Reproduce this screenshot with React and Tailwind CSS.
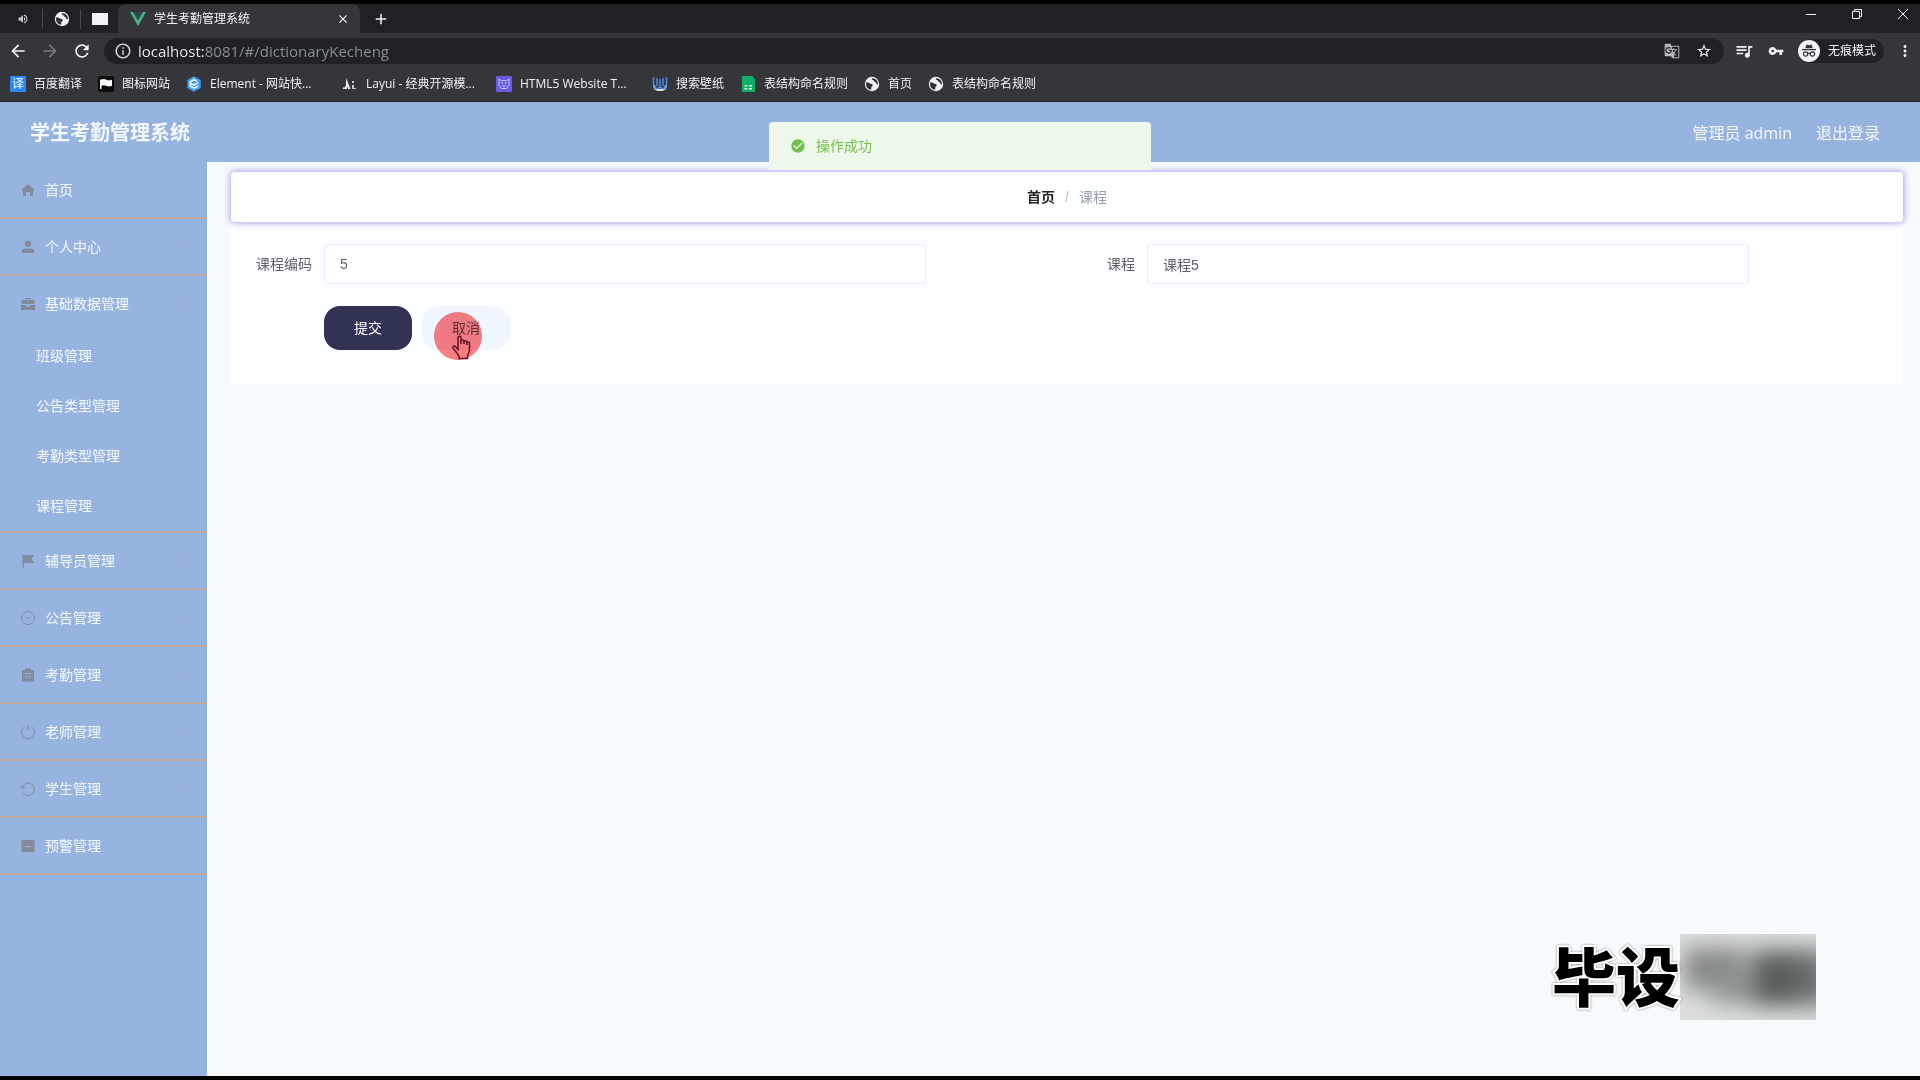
import { useState } from "react";
import {
  MdAdd,
  MdArrowBack,
  MdArrowForward,
  MdCheckCircle,
  MdClose,
  MdGTranslate,
  MdInfoOutline,
  MdMoreVert,
  MdQueueMusic,
  MdRefresh,
  MdStarBorder,
  MdVolumeUp,
  MdVpnKey,
} from "react-icons/md";
import { ChevronDown, ChevronUp } from "lucide-react";

function GlobeIcon() {
  return (
    <svg viewBox="0 0 16 16" className="size-4 shrink-0">
      <circle cx="8" cy="8" r="7.2" fill="#f1f3f4" />
      <path
        d="M2.600 6.200c1.800-.2 2.200.8 3.400 1.200 1.400.5 2.600.3 2.800 1.600.2 1.300-1.500 1.300-1.600 2.600v2.200C4 13.500 2 11 2 8c0-.7.3-1.300.6-1.800zM8.200 2.200c-.8.9-.3 1.700.8 1.900 1 .2.6 1.500 1.900 1.700 1.100.2 1.300 1.200.8 2 1.200-.3 2 .4 2.200.9.6-3.400-2-6.600-5.700-6.500z"
        fill="#303134"
      />
    </svg>
  );
}

function VueIcon() {
  return (
    <svg viewBox="0 0 16 14" className="h-3.5 w-4 shrink-0">
      <path d="M0 0h3.200L8 8.400 12.800 0H16L8 14z" fill="#41b883" />
      <path d="M3.200 0h2.900L8 3.400 9.900 0h2.900L8 8.400z" fill="#35495e" />
    </svg>
  );
}

function TranslateBadge() {
  return (
    <span className="flex size-4 shrink-0 items-center justify-center bg-[#2b87f5] text-[12px] leading-4 text-white">
      译
    </span>
  );
}

function FlagBadge() {
  return (
    <svg viewBox="0 0 16 16" className="size-4 shrink-0">
      <rect width="16" height="16" rx="2" fill="#0c0c0d" />
      <path
        d="M2 3.500h1.500c2-1 3.500-.5 4.800.2 1.700.9 3.200.7 5.700 0v6c-2.500 1-4 .9-5.800.1-1.500-.7-3-.8-4.700 0V13H2z"
        fill="#fff"
      />
    </svg>
  );
}

function ElementBadge() {
  return (
    <svg viewBox="0 0 16 16" className="size-4 shrink-0">
      <path d="M8 .3l6.700 3.800v7.800L8 15.700 1.300 11.900V4.100z" fill="#409eff" />
      <path
        d="M11.500 4.700L8 2.800 3.600 5.300v5.300L8 13.100l4.200-2.400V9.200L8 11.500l-2.900-1.600V8.600L8 10l4.200-2.400V6L8 8.300 5.100 7V6.200L8 4.600l2 1.100z"
        fill="#fff"
      />
    </svg>
  );
}

function LayuiBadge() {
  return (
    <svg viewBox="0 0 16 16" className="size-4 shrink-0">
      <path d="M4 2l4.500 11H6.200L5 9.500V13H1v-1.500h1.800L4 9z" fill="#f1f3f4" />
      <path d="M10 5h2v2h-2zM10 9h2v4h-2zM12 12h2v1h-2z" fill="#c8cacd" />
    </svg>
  );
}

function HtmlBadge() {
  return (
    <svg viewBox="0 0 16 16" className="size-4 shrink-0">
      <rect width="16" height="16" fill="#6a5be2" />
      <path
        d="M3 3l2.500 1.500h5L13 3v6l-2 3.500H5L3 9z"
        fill="none"
        stroke="#b9c4ff"
      />
      <path d="M5.500 7h1.500M9 7h1.500M6.500 10h3" stroke="#dfe4ff" />
    </svg>
  );
}

function WallpaperBadge() {
  return (
    <svg viewBox="0 0 16 16" className="size-4 shrink-0" fill="none">
      <path d="M2 9c0 3 2 5 6 5s6-2 6-5" stroke="#e7eefb" strokeWidth="2" />
      <path
        d="M1.500 1v8c0 2 1.500 3.500 3.500 3.500s3-1.500 3-3.500V3M8 9c0 2 1 3.500 3 3.500s3.500-1.500 3.500-3.500V1M5 2v8M11 2v8"
        stroke="#4a8ae6"
        strokeWidth="1.500"
      />
    </svg>
  );
}

function SheetBadge() {
  return (
    <svg viewBox="0 0 16 16" className="size-4 shrink-0">
      <path d="M2 0h10l3 3v13H2z" fill="#12ad66" />
      <path d="M4.500 9h3v1.500h-3zM9 9h3v1.500H9zM4.500 12h3v1.500h-3zM9 12h3v1.500H9z" fill="#d9f6e6" />
    </svg>
  );
}

function IncognitoIcon() {
  return (
    <svg viewBox="0 0 22 22" className="size-[22px] shrink-0">
      <circle cx="11" cy="11" r="11" fill="#f1f3f4" />
      <path d="M7.300 8.200L8.400 4.500l2.600.7 2.600-.7 1.100 3.700zM4 9h14v1.200H4z" fill="#35363a" />
      <g fill="none" stroke="#35363a" strokeWidth="1.200">
        <circle cx="7.600" cy="14" r="2.200" />
        <circle cx="14.400" cy="14" r="2.200" />
        <path d="M9.800 13.600c.8-.5 1.600-.5 2.400 0" />
      </g>
    </svg>
  );
}

// Sidebar glyphs, all drawn on a 16px grid
const glyphs = {
  home: <path d="M8 2l6.500 6-1.500 1v5h-3v-4H6v4H3V9L1.500 8z" fill="currentColor" />,
  user: (
    <path
      d="M8 1.500a3.300 3.300 0 110 6.600 3.300 3.300 0 010-6.600zM1.500 14c0-3 1.500-4.500 4-4.500h5c2.500 0 4 1.500 4 4.500z"
      fill="currentColor"
    />
  ),
  briefcase: (
    <path
      d="M5 4V2h6v2h3.500v4h-13V4zm1.200 0h3.600v-.9H6.200zM1 9h5v1.500h4V9h5v5H1z"
      fill="currentColor"
    />
  ),
  flag: <path d="M2.500 2H14l-2.500 4L14 10H4v4.500H2.500z" fill="currentColor" />,
  chat: (
    <g fill="none" stroke="currentColor">
      <circle cx="8" cy="8" r="6.500" />
      <path d="M5.500 8.500c1.500-1 3.500-1 5 0" />
    </g>
  ),
  clipboard: (
    <>
      <path d="M2 3h3V1.500h6V3h3v11.500H2z" fill="currentColor" />
      <path d="M4.500 6.500h7M5 10h6" stroke="#97b4e1" />
    </>
  ),
  power: (
    <path
      d="M4.500 2.800A6.500 6.500 0 1 0 11.500 2.800M8 1.500V6"
      fill="none"
      stroke="currentColor"
    />
  ),
  refresh: (
    <path
      d="M2 7A6.300 6.300 0 1 1 3 12M.5 4.500L2 7.500l3-1.500"
      fill="none"
      stroke="currentColor"
    />
  ),
  comment: (
    <>
      <path d="M1.500 2h13v12h-13z" fill="currentColor" />
      <path d="M5 8.500h6" stroke="#97b4e1" />
    </>
  ),
};

const bookmarks = [
  { label: "百度翻译", icon: <TranslateBadge />, width: "w-12" },
  { label: "图标网站", icon: <FlagBadge />, width: "w-12" },
  { label: "Element - 网站快...", icon: <ElementBadge />, width: "w-[116px]" },
  { label: "Layui - 经典开源模...", icon: <LayuiBadge />, width: "w-[114px]" },
  { label: "HTML5 Website T...", icon: <HtmlBadge />, width: "w-[116px]" },
  { label: "搜索壁纸", icon: <WallpaperBadge />, width: "w-12" },
  { label: "表结构命名规则", icon: <SheetBadge />, width: "w-[84px]" },
  { label: "首页", icon: <GlobeIcon />, width: "w-6" },
  { label: "表结构命名规则", icon: <GlobeIcon />, width: "w-[84px]" },
];

const menu = [
  { label: "首页", icon: "home" },
  { label: "个人中心", icon: "user", arrow: true },
  {
    label: "基础数据管理",
    icon: "briefcase",
    arrow: true,
    children: ["班级管理", "公告类型管理", "考勤类型管理", "课程管理"],
  },
  { label: "辅导员管理", icon: "flag", arrow: true },
  { label: "公告管理", icon: "chat", arrow: true },
  { label: "考勤管理", icon: "clipboard", arrow: true },
  { label: "老师管理", icon: "power", arrow: true },
  { label: "学生管理", icon: "refresh", arrow: true },
  { label: "预警管理", icon: "comment" },
];

function BrowserChrome() {
  return (
    <div className="border-b border-[#27282b] bg-[#35363a] text-[#f1f3f4]">
      <div className="flex h-[29px] items-stretch bg-[#202124]">
        <div className="flex w-[118px] items-center">
          <button type="button" aria-label="声音标签页" className="flex w-[42px] items-center justify-center pl-1">
            <MdVolumeUp className="size-3 text-[#c8cacd]" />
          </button>
          <button
            type="button"
            aria-label="网页标签页"
            className="flex h-5 w-[39px] items-center justify-center border-x border-[#4a4b4f]"
          >
            <GlobeIcon />
          </button>
          <button type="button" aria-label="空白标签页" className="flex flex-1 items-center justify-center">
            <span className="h-3 w-4 bg-[#f1f3f4]" />
          </button>
        </div>
        <div className="flex w-[242px] items-center rounded-t-lg bg-[#35363a] pr-2.5 pl-3">
          <VueIcon />
          <span className="ml-2 flex-1 text-[12px] leading-4">学生考勤管理系统</span>
          <button type="button" aria-label="关闭标签页">
            <MdClose className="size-3.5" />
          </button>
        </div>
        <button type="button" aria-label="新标签页" className="ml-3">
          <MdAdd className="size-[18px]" />
        </button>
        <div className="ml-auto flex h-5 items-center gap-9 pr-3">
          <button type="button" aria-label="最小化" className="flex size-2.5 items-center">
            <span className="h-px w-full bg-[#f1f3f4]" />
          </button>
          <button type="button" aria-label="还原">
            <svg viewBox="0 0 10 10" className="size-2.5" fill="none" stroke="#f1f3f4">
              <path d="M.5 2.500h7v7h-7zM2.500 2.500v-2h7v7h-2" />
            </svg>
          </button>
          <button type="button" aria-label="关闭">
            <svg viewBox="0 0 10 10" className="size-2.5" stroke="#f1f3f4">
              <path d="M0 0l10 10M10 0L0 10" />
            </svg>
          </button>
        </div>
      </div>

      <div className="flex h-9 items-center pr-1.5 pl-2">
        <button type="button" aria-label="后退">
          <MdArrowBack className="size-5" />
        </button>
        <button type="button" aria-label="前进" className="ml-3">
          <MdArrowForward className="size-5 text-[#77797d]" />
        </button>
        <button type="button" aria-label="刷新" className="ml-3">
          <MdRefresh className="size-5" />
        </button>
        <div className="ml-3 flex h-[26px] flex-1 items-center rounded-full bg-[#202124] pr-3 pl-2.5">
          <MdInfoOutline className="size-[18px] shrink-0 text-[#d4d6d9]" />
          <input
            aria-label="地址栏"
            defaultValue="localhost:8081/#/dictionaryKecheng"
            className="ml-1.5 flex-1 bg-[linear-gradient(90deg,#f1f3f4_66px,#8d9196_66px)] bg-clip-text text-[15px] leading-5 text-transparent outline-none"
          />
          <button type="button" aria-label="翻译">
            <MdGTranslate className="size-4 text-[#b6b8bb]" />
          </button>
          <button type="button" aria-label="收藏" className="ml-4">
            <MdStarBorder className="size-4" />
          </button>
        </div>
        <div className="flex items-center pl-2.5">
          <button type="button" aria-label="媒体控制">
            <MdQueueMusic className="size-5" />
          </button>
          <button type="button" aria-label="密码" className="ml-3.5">
            <MdVpnKey className="size-4" />
          </button>
          <button
            type="button"
            className="ml-3.5 flex h-6 items-center gap-2 rounded-full bg-[#202124] pr-2 text-[12px] leading-4"
          >
            <IncognitoIcon />
            无痕模式
          </button>
          <button type="button" aria-label="更多" className="ml-3">
            <MdMoreVert className="size-[18px]" />
          </button>
        </div>
      </div>

      <div className="flex h-8 items-center gap-4 pb-[3px] pl-2.5">
        {bookmarks.map(({ label, icon, width }, index) => (
          <a key={index} href="#" className="flex items-center gap-2">
            {icon}
            <span className={`${width} text-[12px] leading-4 whitespace-nowrap`}>{label}</span>
          </a>
        ))}
      </div>
    </div>
  );
}

function Sidebar() {
  const [openItem, setOpenItem] = useState("基础数据管理");

  return (
    <nav className="w-[207px] shrink-0 text-[14px] leading-5 text-[#f4f9ff]">
      {menu.map(({ label, icon, arrow, children }) => {
        const isOpen = openItem === label;
        const Arrow = isOpen ? ChevronUp : ChevronDown;
        return (
          <div key={label} className="border-b-2 border-[#bfab9f]">
            <button
              type="button"
              onClick={() => setOpenItem(isOpen ? null : label)}
              className="flex h-[55px] w-full items-center pr-5 pl-5 text-left"
            >
              <svg viewBox="0 0 16 16" className="mr-[9px] size-4 text-[#828a9c]">
                {glyphs[icon]}
              </svg>
              <span className="flex-1">{label}</span>
              {arrow && <Arrow className="size-3 text-[#b5a9d3]" strokeWidth={2} />}
            </button>
            {children && isOpen && (
              <ul>
                {children.map((child) => (
                  <li key={child}>
                    <a href="#" className="flex h-[50px] items-center pl-9">
                      {child}
                    </a>
                  </li>
                ))}
              </ul>
            )}
          </div>
        );
      })}
    </nav>
  );
}

function FormField({ id, label, defaultValue }) {
  return (
    <div className="flex items-center">
      <label htmlFor={id} className="w-20 shrink-0 pr-3 text-right">
        {label}
      </label>
      <div className="flex-1">
        <input
          id={id}
          defaultValue={defaultValue}
          className="h-10 w-[81%] rounded border border-[#e9edf2] bg-transparent px-[15px] outline-none"
        />
      </div>
    </div>
  );
}

function Pointer() {
  return (
    <svg viewBox="0 0 48 48" className="pointer-events-none absolute top-1.5 left-3 size-12 max-w-none mix-blend-multiply">
      <circle cx="24" cy="24" r="24" fill="#ff7e82" />
      <path
        d="M24 25.500c0-1.800 3-1.800 3 0v6.500-3c0-1.500 3-1.500 3 0v1c0-1.500 2.800-1.500 2.800 0v1c0-1.500 2.700-1.300 2.700.2v6.300c0 3-1.500 4.500-2 6.500v2.500h-8.500v-2c-1-3-4.500-5.500-6-8.500-.8-2 1.500-2.700 2.800-1l2.200 2.500zM30 32v-2M32.800 33v-2"
        fill="none"
        stroke="#6b1220"
        strokeWidth="1.500"
      />
    </svg>
  );
}

function Watermark() {
  return (
    <div className="pointer-events-none absolute right-26 bottom-14 flex items-center">
      <span className="text-[64px] leading-[86px] font-black text-black [paint-order:stroke] [-webkit-text-stroke:4px_#fff] drop-shadow-[0_0_1px_#888]">
        毕设
      </span>
      <svg viewBox="0 0 136 86" className="h-[86px] w-34">
        <defs>
          <filter id="soft" x="-50%" y="-50%" width="200%" height="200%">
            <feGaussianBlur stdDeviation="11" />
          </filter>
        </defs>
        <rect width="136" height="86" fill="#dcdede" />
        <g filter="url(#soft)">
          <rect x="4" y="14" width="62" height="42" fill="#868888" />
          <rect x="32" y="40" width="42" height="30" fill="#929494" />
          <rect x="72" y="16" width="56" height="56" fill="#5c5e5e" />
          <rect x="120" y="16" width="30" height="56" fill="#6e7070" />
        </g>
      </svg>
    </div>
  );
}

export default function App() {
  return (
    <div className="flex min-h-screen flex-col border-y-4 border-black bg-[#97b4e1] font-['Open_Sans','Noto_Sans_CJK_SC',sans-serif]">
      <BrowserChrome />

      <div className="relative flex flex-1 flex-col">
        <header className="flex h-[60px] items-center justify-between pt-0.5 pr-10 pl-[30px] text-[#f4f9ff]">
          <h1 className="text-[20px] leading-7 font-bold">学生考勤管理系统</h1>
          <div className="flex items-center gap-6 text-[16px] leading-6">
            <span>管理员 admin</span>
            <a href="#">退出登录</a>
          </div>
        </header>

        <div
          role="alert"
          className="absolute top-5 left-1/2 z-10 flex h-12 w-[382px] -translate-x-1/2 items-center gap-2.5 rounded-t bg-[#eef8ea] px-[21px] text-[14px] leading-5 text-[#75bf52]"
        >
          <MdCheckCircle className="size-4" />
          操作成功
        </div>

        <div className="flex flex-1">
          <Sidebar />
          <main className="flex-1 bg-[#f6fafc] pt-2.5 pr-[17px] pl-6 font-['Liberation_Sans','Noto_Sans_CJK_SC',sans-serif] text-[14px] leading-5 text-[#606266]">
            <nav
              aria-label="面包屑"
              className="relative flex h-[50px] items-center justify-center rounded bg-[#fdffff] shadow-[0_0_6px_1px_#a9a0ee]"
            >
              <a href="#" className="font-bold text-[#222427]">
                首页
              </a>
              <span className="mx-2.5 text-[#b4b8c2]">/</span>
              <span className="text-[#999eae]">课程</span>
            </nav>

            <form className="bg-[#fdfeff] px-[13px] pt-[22px] pb-[34px]" onSubmit={(e) => e.preventDefault()}>
              <div className="grid grid-cols-2">
                <FormField id="code" label="课程编码" defaultValue="5" />
                <FormField id="course" label="课程" defaultValue="课程5" />
              </div>
              <div className="mt-[22px] flex gap-2.5 pl-20">
                <button type="submit" className="h-11 w-22 rounded-2xl bg-[#303354] text-white">
                  提交
                </button>
                <div className="relative">
                  <button type="button" className="h-11 w-22 rounded-2xl bg-[#f0f6ff] text-[#606266]">
                    取消
                  </button>
                  <Pointer />
                </div>
              </div>
            </form>
          </main>
        </div>

        <Watermark />
      </div>
    </div>
  );
}
